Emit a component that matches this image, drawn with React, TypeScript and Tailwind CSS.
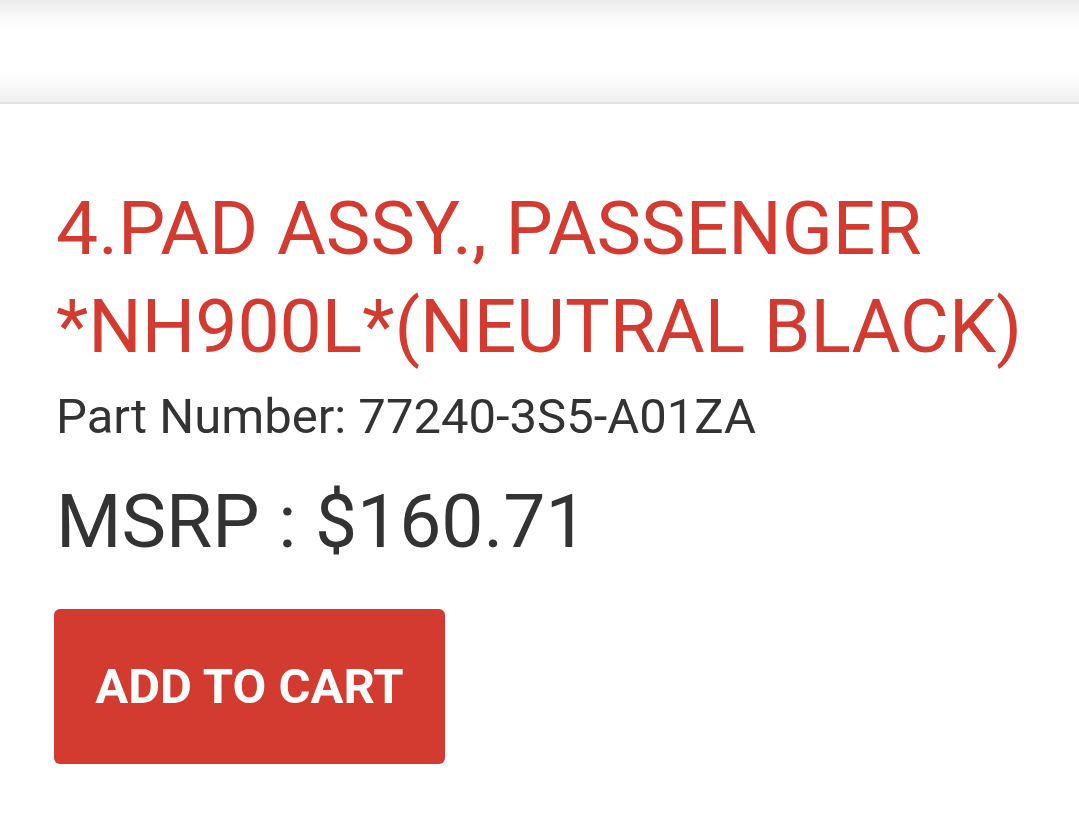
export default function App() {
  return (
    <div className="min-h-screen bg-white" style={{ fontFamily: 'Roboto, "Liberation Sans", sans-serif' }}>
      {/* Header strip */}
      <div className="h-[104px] bg-[linear-gradient(to_bottom,#ececec_0px,#f7f7f7_14px,#ffffff_30px,#ffffff_72px,#f8f8f8_88px,#f1f0f0_100px)] border-b-2 border-[#e6e3e3]" />

      {/* Product details */}
      <div className="px-[56px] pt-[75px]">
        <h1 className="text-[75px] leading-[98px] font-normal text-[#d33b31]">
          4.PAD ASSY., PASSENGER *NH900L*(NEUTRAL BLACK)
        </h1>
        <p className="mt-[16px] text-[49px] leading-[52px] text-[#333333]">Part Number: 77240-3S5-A01ZA</p>
        <p className="mt-[33px] text-[75px] leading-[90px] text-[#333333]">MSRP : $160.71</p>
        <button className="mt-[43px] -ml-[2px] h-[155px] w-[391px] rounded-[6px] bg-[#d33b31] text-[49px] font-bold text-white">
          ADD TO CART
        </button>
      </div>
    </div>
  );
}
